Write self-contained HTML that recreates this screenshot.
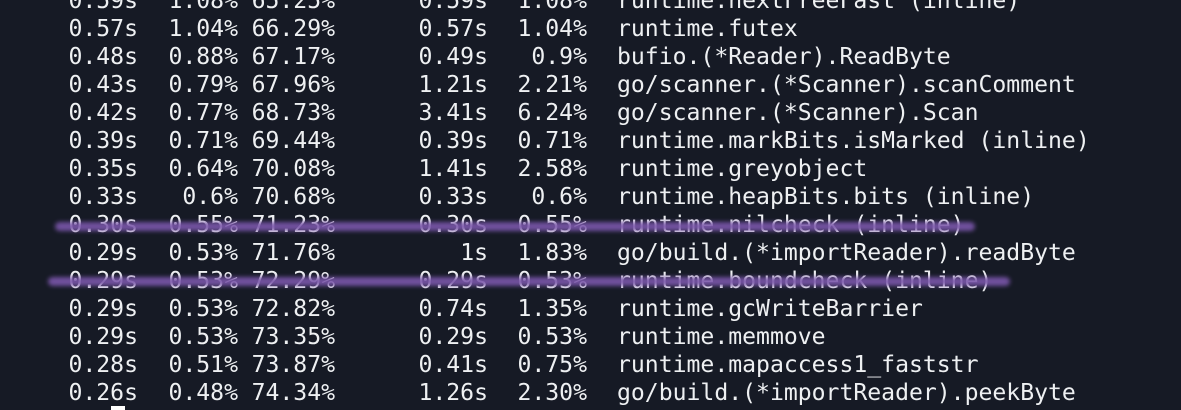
<!DOCTYPE html>
<html><head><meta charset="utf-8"><style>
html,body{margin:0;padding:0;background:#161a25;width:1181px;height:410px;overflow:hidden;position:relative}
.w{position:absolute;left:0;top:1px;width:1181px;height:410px}
.r{position:absolute;left:0;height:28px;width:1181px;font-family:"DejaVu Sans Mono","Liberation Mono",monospace;font-size:23.1px;line-height:28px;color:#eef0f2;white-space:pre}
.r span{position:absolute;top:0}
.a{right:1043px}.b{right:943px}.c{right:846px}.d{right:693px}.e{right:594px}.n{left:617px}
.s{position:absolute;height:9px;border-radius:5px;background:#7a56aa;filter:blur(2px);opacity:.9}
.cur{position:absolute;left:111px;top:406px;width:14px;height:4px;background:#fff}
</style></head><body>
<div class="w">
<div class="r" style="top:-14px"><span class="a">0.59s</span><span class="b">1.08%</span><span class="c">65.25%</span><span class="d">0.59s</span><span class="e">1.08%</span><span class="n">runtime.nextFreeFast (inline)</span></div>
<div class="r" style="top:14px"><span class="a">0.57s</span><span class="b">1.04%</span><span class="c">66.29%</span><span class="d">0.57s</span><span class="e">1.04%</span><span class="n">runtime.futex</span></div>
<div class="r" style="top:42px"><span class="a">0.48s</span><span class="b">0.88%</span><span class="c">67.17%</span><span class="d">0.49s</span><span class="e">0.9%</span><span class="n">bufio.(*Reader).ReadByte</span></div>
<div class="r" style="top:70px"><span class="a">0.43s</span><span class="b">0.79%</span><span class="c">67.96%</span><span class="d">1.21s</span><span class="e">2.21%</span><span class="n">go/scanner.(*Scanner).scanComment</span></div>
<div class="r" style="top:98px"><span class="a">0.42s</span><span class="b">0.77%</span><span class="c">68.73%</span><span class="d">3.41s</span><span class="e">6.24%</span><span class="n">go/scanner.(*Scanner).Scan</span></div>
<div class="r" style="top:126px"><span class="a">0.39s</span><span class="b">0.71%</span><span class="c">69.44%</span><span class="d">0.39s</span><span class="e">0.71%</span><span class="n">runtime.markBits.isMarked (inline)</span></div>
<div class="r" style="top:154px"><span class="a">0.35s</span><span class="b">0.64%</span><span class="c">70.08%</span><span class="d">1.41s</span><span class="e">2.58%</span><span class="n">runtime.greyobject</span></div>
<div class="r" style="top:182px"><span class="a">0.33s</span><span class="b">0.6%</span><span class="c">70.68%</span><span class="d">0.33s</span><span class="e">0.6%</span><span class="n">runtime.heapBits.bits (inline)</span></div>
<div class="r" style="top:210px"><span class="a">0.30s</span><span class="b">0.55%</span><span class="c">71.23%</span><span class="d">0.30s</span><span class="e">0.55%</span><span class="n">runtime.nilcheck (inline)</span></div>
<div class="r" style="top:238px"><span class="a">0.29s</span><span class="b">0.53%</span><span class="c">71.76%</span><span class="d">1s</span><span class="e">1.83%</span><span class="n">go/build.(*importReader).readByte</span></div>
<div class="r" style="top:266px"><span class="a">0.29s</span><span class="b">0.53%</span><span class="c">72.29%</span><span class="d">0.29s</span><span class="e">0.53%</span><span class="n">runtime.boundcheck (inline)</span></div>
<div class="r" style="top:294px"><span class="a">0.29s</span><span class="b">0.53%</span><span class="c">72.82%</span><span class="d">0.74s</span><span class="e">1.35%</span><span class="n">runtime.gcWriteBarrier</span></div>
<div class="r" style="top:322px"><span class="a">0.29s</span><span class="b">0.53%</span><span class="c">73.35%</span><span class="d">0.29s</span><span class="e">0.53%</span><span class="n">runtime.memmove</span></div>
<div class="r" style="top:350px"><span class="a">0.28s</span><span class="b">0.51%</span><span class="c">73.87%</span><span class="d">0.41s</span><span class="e">0.75%</span><span class="n">runtime.mapaccess1_faststr</span></div>
<div class="r" style="top:378px"><span class="a">0.26s</span><span class="b">0.48%</span><span class="c">74.34%</span><span class="d">1.26s</span><span class="e">2.30%</span><span class="n">go/build.(*importReader).peekByte</span></div>
</div>
<div class="s" style="left:55px;top:222px;width:920px"></div>
<div class="s" style="left:48px;top:277px;width:962px"></div>
<div class="cur"></div>
</body></html>
